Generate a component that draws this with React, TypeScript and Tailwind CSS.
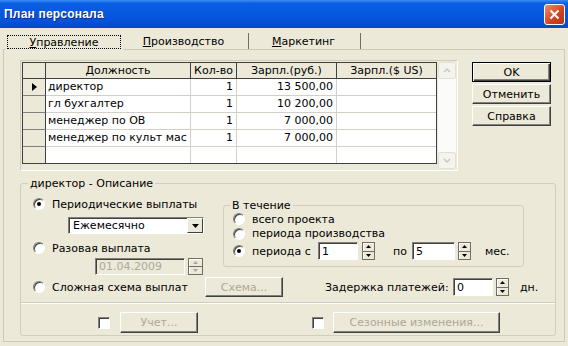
import React from 'react';

const rows = [
  { name: 'директор', qty: '1', rub: '13 500,00', usd: '', cur: true },
  { name: 'гл бухгалтер', qty: '1', rub: '10 200,00', usd: '' },
  { name: 'менеджер по ОВ', qty: '1', rub: '7 000,00', usd: '' },
  { name: 'менеджер по культ мас', qty: '1', rub: '7 000,00', usd: '' },
  { name: '', qty: '', rub: '', usd: '' },
];

function Radio({ checked }: { checked?: boolean }) {
  return (
    <span className="flex h-[12px] w-[12px] shrink-0 items-center justify-center rounded-full border border-t-[#808080] border-l-[#808080] border-b-white border-r-white bg-white shadow-[inset_1px_1px_0_#404040]">
      {checked && <span className="h-[4px] w-[4px] rounded-full bg-black" />}
    </span>
  );
}

function Check({ className = '' }: { className?: string }) {
  return (
    <span className={`block h-[12px] w-[12px] shrink-0 border border-t-[#808080] border-l-[#808080] border-b-white border-r-white bg-white shadow-[inset_1px_1px_0_#404040] ${className}`} />
  );
}

function Btn({ label, className = '', disabled, def }: { label: string; className?: string; disabled?: boolean; def?: boolean }) {
  const frame = def
    ? 'border border-black shadow-[inset_1px_1px_0_#fff,inset_-1px_-1px_0_#404040,inset_-2px_-2px_0_#808080]'
    : 'border border-t-white border-l-white border-b-[#404040] border-r-[#404040] shadow-[inset_-1px_-1px_0_#808080]';
  return (
    <div className={`flex shrink-0 items-center justify-center bg-[#ece9d8] ${frame} ${disabled ? 'text-[#aca899]' : 'text-black'} ${className}`}>
      {label}
    </div>
  );
}

function Spin({ disabled, className = '' }: { disabled?: boolean; className?: string }) {
  const c = disabled ? '#aca899' : '#000';
  return (
    <div className={`flex shrink-0 flex-col border border-[#6f6d64] bg-[#ece9d8] shadow-[inset_1px_1px_0_#fff] ${className}`}>
      <div className="flex flex-1 items-center justify-center border-b border-[#6f6d64]">
        <svg width="5" height="3" viewBox="0 0 5 3"><path d="M2.5 0L5 3H0z" fill={c} /></svg>
      </div>
      <div className="flex flex-1 items-center justify-center">
        <svg width="5" height="3" viewBox="0 0 5 3"><path d="M0 0h5L2.5 3z" fill={c} /></svg>
      </div>
    </div>
  );
}

function Field({ value, className = '', disabled }: { value: string; className?: string; disabled?: boolean }) {
  return (
    <div className={`flex shrink-0 items-center border border-t-[#808080] border-l-[#808080] border-b-white border-r-white pl-[3px] shadow-[inset_1px_1px_0_#404040] ${disabled ? 'bg-[#ece9d8] text-[#aca899]' : 'bg-white'} ${className}`}>
      {value}
    </div>
  );
}

function ScrollBtn({ up }: { up?: boolean }) {
  return (
    <div className="flex h-[17px] items-center justify-center rounded-[2px] border border-[#e2e0d6] bg-[#f4f3ee]">
      <svg width="8" height="5" viewBox="0 0 8 5">
        <path d={up ? 'M1 4L4 1L7 4' : 'M1 1L4 4L7 1'} stroke="#c9c7bc" strokeWidth="1.5" fill="none" />
      </svg>
    </div>
  );
}

export default function App() {
  return (
    <div className="h-[346px] w-[568px] overflow-hidden bg-[#ece9d8] font-['DejaVu_Sans','Liberation_Sans',sans-serif] text-[11px] leading-[13px] text-black">
      {/* title bar */}
      <div className="flex h-[28px] items-center justify-between bg-[linear-gradient(to_bottom,#3b8cf5_0%,#0a5ee4_12%,#0554dc_70%,#0448c8_100%)] pl-[4px] pr-[3px]">
        <span className="font-['Liberation_Sans',sans-serif] text-[12px] font-bold tracking-[0.2px] text-white [text-shadow:1px_1px_0_#0b2a8a]">План персонала</span>
        <div className="flex h-[21px] w-[21px] items-center justify-center rounded-[3px] border border-white bg-[linear-gradient(135deg,#f08a6a,#d2431f_60%,#b8341a)]">
          <svg width="11" height="11" viewBox="0 0 11 11">
            <path d="M1.5 1.5L9.5 9.5M9.5 1.5L1.5 9.5" stroke="#fff" strokeWidth="2" />
          </svg>
        </div>
      </div>

      <div className="px-[3px]">
        {/* tabs */}
        <div className="flex h-[21px] items-end pl-[2px]">
          <div className="relative z-10 -mb-px flex h-[19px] w-[118px] items-start bg-[#ece9d8] px-[2px] pt-[4px]">
            <div className="flex h-[14px] w-full items-center justify-center border border-dotted border-black">
              <span><span className="underline">У</span>правление</span>
            </div>
          </div>
          <div className="flex h-[16px] w-[126px] items-center justify-center border-r border-[#6f6d64] pr-[4px]">
            <span><span className="underline">П</span>роизводство</span>
          </div>
          <div className="flex h-[16px] w-[112px] items-center justify-center border-r border-[#6f6d64] pr-[2px]">
            <span><span className="underline">М</span>аркетинг</span>
          </div>
        </div>

        {/* tab panel */}
        <div className="h-[293px] border border-[#cdc9b8] bg-[#ece9d8] pl-[16px] pt-[10px]">
          <div className="flex items-start gap-[14px]">
            {/* grid */}
            <div className="flex h-[111px] w-[438px] gap-[1px] border border-t-[#cfccbe] border-l-[#cfccbe] border-b-white border-r-white p-[1px]">
              <div className="w-[415px] self-start border border-[#404040]">
                <div className="flex h-[16px] border-b border-[#404040] bg-[#ece9d8]">
                  <div className="w-[23px] border-r border-[#404040]" />
                  <div className="w-[145px] border-r border-[#404040] text-center leading-[15px]">Должность</div>
                  <div className="w-[46px] border-r border-[#404040] text-center leading-[15px]">Кол-во</div>
                  <div className="w-[100px] border-r border-[#404040] text-center leading-[15px]">Зарпл.(руб.)</div>
                  <div className="w-[99px] text-center leading-[15px]">Зарпл.($ US)</div>
                </div>
                {rows.map((r, i) => {
                  const last = i === rows.length - 1;
                  return (
                    <div key={i} className={`flex ${last ? 'h-[16px]' : 'h-[17px] border-b border-[#d4d0c8]'}`}>
                      <div className={`flex w-[23px] items-center justify-center border-r border-[#404040] bg-[#ece9d8] ${last ? '' : '-mb-px border-b border-b-[#808080]'}`}>
                        {r.cur && (
                          <svg width="5" height="8" viewBox="0 0 5 8"><path d="M0 0L5 4L0 8z" fill="#000" /></svg>
                        )}
                      </div>
                      <div className="w-[145px] border-r border-[#d4d0c8] bg-white pl-[2px] leading-[16px]">{r.name}</div>
                      <div className="w-[46px] border-r border-[#d4d0c8] bg-white pr-[3px] text-right leading-[16px]">{r.qty}</div>
                      <div className="w-[100px] border-r border-[#d4d0c8] bg-white pr-[3px] text-right leading-[16px]">{r.rub}</div>
                      <div className="w-[99px] bg-white pr-[3px] text-right leading-[16px]">{r.usd}</div>
                    </div>
                  );
                })}
              </div>
              <div className="flex w-[18px] flex-col justify-between bg-[#fbfbf9]">
                <ScrollBtn up />
                <ScrollBtn />
              </div>
            </div>

            {/* dialog buttons */}
            <div className="mt-[2px] flex w-[79px] flex-col gap-[2px]">
              <Btn label="OK" def className="h-[20px]" />
              <Btn label="Отменить" className="h-[20px]" />
              <Btn label="Справка" className="h-[20px]" />
            </div>
          </div>

          {/* description group */}
          <fieldset className="mt-[6px] w-[536px] rounded-[3px] border border-[#d0cdbe]">
            <legend className="ml-[7px] px-[2px] leading-[13px]">директор - Описание</legend>

            <div className="flex items-start">
              <div className="flex w-[202px] flex-col pl-[12px] pt-[7px]">
                <div className="flex h-[14px] items-center gap-[7px]">
                  <Radio checked />
                  <span>Периодические выплаты</span>
                </div>
                <div className="ml-[35px] mt-[6px] flex h-[17px] w-[136px] border border-t-[#808080] border-l-[#808080] border-b-white border-r-white bg-white shadow-[inset_1px_1px_0_#404040]">
                  <span className="flex-1 pl-[4px] leading-[15px]">Ежемесячно</span>
                  <span className="flex w-[16px] items-center justify-center border border-t-white border-l-white border-b-[#404040] border-r-[#404040] bg-[#ece9d8]">
                    <svg width="7" height="4" viewBox="0 0 7 4"><path d="M0 0h7L3.5 4z" fill="#000" /></svg>
                  </span>
                </div>
                <div className="mt-[7px] flex h-[14px] items-center gap-[7px]">
                  <Radio />
                  <span>Разовая выплата</span>
                </div>
                <div className="ml-[62px] mt-[3px] flex gap-[3px]">
                  <Field value="01.04.2009" disabled className="h-[17px] w-[90px]" />
                  <Spin disabled className="h-[17px] w-[15px]" />
                </div>
              </div>

              <fieldset className="mt-[9px] h-[68px] w-[301px] rounded-[3px] border border-[#d0cdbe] pb-[5px]">
                <legend className="ml-[6px] px-[2px] leading-[13px]">В течение</legend>
                <div className="flex h-[14px] items-center gap-[7px] pl-[9px]">
                  <Radio />
                  <span>всего проекта</span>
                </div>
                <div className="flex h-[15px] items-center gap-[7px] pl-[9px]">
                  <Radio />
                  <span>периода производства</span>
                </div>
                <div className="mt-[1px] flex h-[18px] items-center pl-[9px]">
                  <Radio checked />
                  <span className="ml-[7px] w-[66px]">периода с</span>
                  <Field value="1" className="h-[18px] w-[40px]" />
                  <Spin className="ml-[4px] h-[18px] w-[13px]" />
                  <span className="ml-[18px] w-[19px]">по</span>
                  <Field value="5" className="h-[18px] w-[43px]" />
                  <Spin className="ml-[3px] h-[18px] w-[13px]" />
                  <span className="ml-[14px]">мес.</span>
                </div>
              </fieldset>
            </div>

            <div className="mt-[2px] flex h-[20px] items-center pl-[12px]">
              <div className="flex w-[172px] items-center gap-[7px]">
                <Radio />
                <span>Сложная схема выплат</span>
              </div>
              <Btn label="Схема..." disabled className="h-[20px] w-[78px]" />
              <span className="ml-[42px] w-[128px]">Задержка платежей:</span>
              <Field value="0" className="h-[18px] w-[40px]" />
              <Spin className="ml-[3px] h-[18px] w-[13px]" />
              <span className="ml-[11px]">дн.</span>
            </div>

            <div className="mt-[5px] h-[2px] border-t border-b border-t-[#d0cdbe] border-b-white" />

            <div className="mb-[2px] mt-[8px] flex h-[21px] items-center">
              <Check className="ml-[77px]" />
              <Btn label="Учет..." disabled className="ml-[10px] h-[21px] w-[78px]" />
              <Check className="ml-[114px]" />
              <Btn label="Сезонные изменения..." disabled className="ml-[9px] h-[21px] w-[167px]" />
            </div>
          </fieldset>
        </div>
      </div>
    </div>
  );
}
